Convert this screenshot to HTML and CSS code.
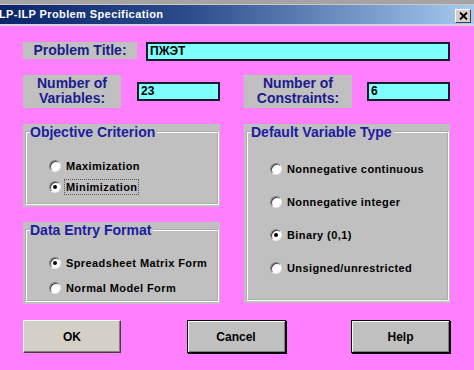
FILE: index.html
```html
<!DOCTYPE html>
<html lang="en">
<head>
    <meta charset="UTF-8">
    <meta name="viewport" content="width=device-width, initial-scale=1.0">
    <title>LP-ILP Problem Specification</title>
    <link rel="stylesheet" href="styles.css">
</head>
<body>
    <div class="window">
        <div class="frame-top"></div>
        <div class="titlebar">
            <span class="title">LP-ILP Problem Specification</span>
            <span class="close">
                <svg width="9" height="8" viewBox="0 0 9 8"><path d="M1 0.5 L8 7.5 M8 0.5 L1 7.5" stroke="#000" stroke-width="1.8"/></svg>
            </span>
        </div>

        <div class="content">
            <div class="row-title">
                <div class="tag tag-title">Problem Title:</div>
                <div class="field field-wide">ПЖЭТ</div>
            </div>

            <div class="cols row-counts">
                <div class="count">
                    <div class="tag tag-vars">Number of<br>Variables:</div>
                    <div class="field field-num">23</div>
                </div>
                <div class="count">
                    <div class="tag tag-cons">Number of<br>Constraints:</div>
                    <div class="field field-num">6</div>
                </div>
            </div>

            <div class="cols groups">
                <div class="stack">
                    <div class="group group-objective">
                        <fieldset>
                            <legend>Objective Criterion</legend>
                            <div class="options">
                                <div class="option"><span class="radio"></span><span class="label">Maximization</span></div>
                                <div class="option"><span class="radio checked"></span><span class="label focus">Minimization</span></div>
                            </div>
                        </fieldset>
                    </div>
                    <div class="group group-entry">
                        <fieldset>
                            <legend>Data Entry Format</legend>
                            <div class="options">
                                <div class="option"><span class="radio checked"></span><span class="label">Spreadsheet Matrix Form</span></div>
                                <div class="option"><span class="radio"></span><span class="label">Normal Model Form</span></div>
                            </div>
                        </fieldset>
                    </div>
                </div>
                <div class="group group-type">
                    <fieldset>
                        <legend>Default Variable Type</legend>
                        <div class="options">
                            <div class="option"><span class="radio"></span><span class="label">Nonnegative continuous</span></div>
                            <div class="option"><span class="radio"></span><span class="label">Nonnegative integer</span></div>
                            <div class="option"><span class="radio checked"></span><span class="label">Binary (0,1)</span></div>
                            <div class="option"><span class="radio"></span><span class="label">Unsigned/unrestricted</span></div>
                        </div>
                    </fieldset>
                </div>
            </div>

            <div class="buttons">
                <button class="btn btn-ok">OK</button>
                <button class="btn btn-cancel">Cancel</button>
                <button class="btn btn-help">Help</button>
            </div>
        </div>
    </div>
</body>
</html>
```

FILE: styles.css
```css
body {
    margin: 0;
    font-family: "Liberation Sans", Arial, sans-serif;
    background-color: #ff80ff;
}
.window {
    width: 474px;
    height: 370px;
    background-color: #ff80ff;
    overflow: hidden;
}
.frame-top {
    height: 4px;
    background-color: #a4a4a4;
    border-bottom: 1px solid #c8c8c8;
}
.titlebar {
    height: 19px;
    display: flex;
    justify-content: space-between;
    background: linear-gradient(to right, #0a246a, #2c4c8c 40%, #a6caf0);
    border-bottom: 2px solid #d6d3e4;
    padding-right: 3px;
}
.title {
    color: #fff;
    font-size: 11px;
    font-weight: bold;
    letter-spacing: 0.4px;
    line-height: 19px;
    margin-left: -1px;
}
.close {
    width: 14px;
    height: 12px;
    margin-top: 4px;
    display: flex;
    align-items: center;
    justify-content: center;
    background-color: #d4d0c8;
    border: 1px solid;
    border-color: #fff #404040 #404040 #fff;
}
.content {
    padding: 16px 0 0 23px;
    width: 427px;
}
.tag {
    background-color: #c0c0c0;
    color: #1c1c8c;
    font-size: 14px;
    font-weight: bold;
    text-align: center;
    box-sizing: border-box;
}
.field {
    background-color: #80ffff;
    border: 2px solid #1a1a2a;
    box-sizing: border-box;
    height: 19px;
    font-size: 12px;
    font-weight: bold;
    line-height: 15px;
    padding-left: 2px;
    color: #000;
}
.row-title {
    display: flex;
    gap: 9px;
    align-items: flex-start;
}
.tag-title {
    width: 114px;
    height: 17px;
    line-height: 17px;
}
.field-wide {
    flex: 1;
}
.cols {
    display: grid;
    grid-template-columns: 197px 206px;
    column-gap: 24px;
}
.row-counts {
    margin-top: 14px;
}
.count {
    display: flex;
    align-items: center;
}
.tag-vars, .tag-cons {
    height: 33px;
    line-height: 15px;
    padding-top: 1px;
}
.tag-vars {
    width: 98px;
    margin-right: 16px;
}
.tag-cons {
    width: 108px;
    margin-right: 15px;
}
.field-num {
    width: 83px;
}
.groups {
    margin-top: 16px;
}
.stack {
    display: flex;
    flex-direction: column;
    gap: 15px;
}
.group {
    background-color: #c0c0c0;
    padding: 0 1px 2px 2px;
    box-sizing: border-box;
}
.group-objective {
    height: 83px;
}
.group-entry {
    height: 82px;
}
.group-type {
    height: 179px;
}
fieldset {
    margin: 0;
    height: 100%;
    box-sizing: border-box;
    min-width: 0;
    border: 2px groove #fff;
    padding: 0 0 0 22px;
}
legend {
    color: #1c1ca0;
    font-size: 14px;
    font-weight: bold;
    line-height: 16px;
    padding: 0 2px 0 0;
    margin-left: -19px;
}
.options {
    display: flex;
    flex-direction: column;
}
.group-objective .options {
    margin-top: 18px;
    gap: 5px;
}
.group-entry .options {
    margin-top: 17px;
    gap: 9px;
}
.group-type .options {
    margin-top: 21px;
    gap: 17px;
}
.option {
    display: flex;
    align-items: center;
    height: 16px;
    gap: 4px;
}
.radio {
    width: 10px;
    height: 10px;
    border-radius: 50%;
    background-color: #fff;
    border: 1px solid;
    border-color: #808080 #e8e8e8 #e8e8e8 #808080;
    box-shadow: inset 1px 1px 0 #404040;
    display: flex;
    align-items: center;
    justify-content: center;
}
.radio.checked::after {
    content: "";
    width: 4px;
    height: 4px;
    border-radius: 50%;
    background-color: #000;
}
.label {
    font-size: 11px;
    font-weight: bold;
    letter-spacing: 0.4px;
    color: #000;
    line-height: 14px;
    padding: 0 1px;
}
.label.focus {
    outline: 1px dotted #555;
}
.buttons {
    margin-top: 16px;
    display: flex;
    justify-content: space-between;
}
.btn {
    height: 33px;
    width: 99px;
    font-family: "Liberation Sans", Arial, sans-serif;
    font-size: 12px;
    font-weight: bold;
    color: #000;
    padding: 0;
    cursor: pointer;
}
.btn-ok {
    width: 98px;
    background-color: #d4d0c8;
    border: 1px solid;
    border-color: #fff #404040 #404040 #fff;
    box-shadow: inset -1px -1px 0 #808080;
}
.btn-cancel, .btn-help {
    background-color: #c0c0c0;
    border: 1px solid #000;
    box-shadow: inset 1px 1px 0 #fff, inset -1px -1px 0 #808080, 1px 1px 0 #000;
}
```
